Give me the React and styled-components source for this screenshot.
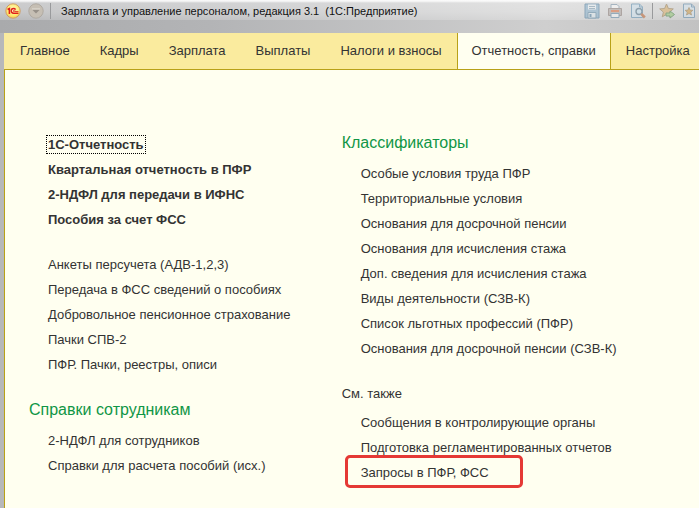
import React from "react";
import styled, { createGlobalStyle } from "styled-components";

const GlobalStyle = createGlobalStyle`
  * {
    box-sizing: border-box;
  }
  html,
  body,
  #root {
    height: 100%;
  }
  body {
    margin: 0;
    font-family: "Liberation Sans", Arial, sans-serif;
    font-size: 13px;
    color: #333;
  }
`;

const Window = styled.div`
  display: flex;
  flex-direction: column;
  min-height: 100%;
  padding-left: 4px;
  overflow: hidden;
  background-color: #b7b8ba;
`;

const TitleBar = styled.header`
  display: flex;
  flex-direction: column;
  height: 33px;
  margin-left: -4px;
  background: linear-gradient(to right, #a9aaac, #b3b4b6 30%, #cfcfcf 78%, #c2c2c2);
`;

const TitleRow = styled.div`
  display: flex;
  align-items: center;
  height: 20px;
  padding: 2px 3px 0 5px;
  background: linear-gradient(
    rgba(255, 255, 255, 0.9) 1px,
    rgba(255, 255, 255, 0.4) 3px,
    rgba(255, 255, 255, 0.35) 12px,
    rgba(255, 255, 255, 0.2)
  );
`;

const TitleButton = styled.button`
  display: flex;
  padding: 0;
  border: none;
  background-color: transparent;
  opacity: ${(props) => (props.$faded ? 0.5 : 1)};
  cursor: pointer;
`;

const ButtonGroup = styled.div`
  display: flex;
  align-items: center;
  gap: 7px;
`;

const Separator = styled.span`
  width: 1px;
  height: 16px;
  margin: 0 6px;
  background-color: #999a9c;
`;

const Title = styled.h1`
  flex: 1;
  margin: 0;
  padding-left: 4px;
  font-size: 11px;
  font-weight: 400;
  line-height: 16px;
  white-space: pre;
  color: #111;
`;

const Tabs = styled.nav`
  display: flex;
  padding-left: 1px;
  background-color: #faeb9e;
  border-bottom: 1px solid #b8a118;
`;

const Tab = styled.a`
  flex: none;
  height: 36px;
  padding: 0 15px;
  line-height: 36px;
  text-decoration: none;
  white-space: nowrap;
  color: #333;
  &.active {
    height: 37px;
    margin-bottom: -1px;
    padding: 0 14px;
    border: solid #b8a118;
    border-width: 0 1px 1px;
    background-color: #fffff0;
  }
`;

const Content = styled.main`
  flex: 1;
  display: grid;
  grid-template-columns: 7fr 8fr;
  padding: 60px 0 16px 24px;
  border-left: 1px solid #b8a118;
  background-color: #fffff0;
`;

const Column = styled.div`
  display: flex;
  flex-direction: column;
  gap: 20px;
  padding-top: ${(props) => props.$top || 0}px;
`;

const SectionTitle = styled.h2`
  margin: 0 0 6px;
  font-size: 16px;
  font-weight: 400;
  line-height: 25px;
  color: #109646;
`;

const SeeAlso = styled.h3`
  margin: 0 0 4px;
  font-size: 13px;
  font-weight: 400;
  line-height: 25px;
`;

const List = styled.ul`
  margin: 0;
  padding: 0 0 0 19px;
  list-style: none;
  font-weight: ${(props) => (props.$bold ? 700 : 400)};
`;

const Item = styled.li`
  display: flex;
  align-items: center;
  height: 25px;
`;

const ItemLink = styled.a`
  position: relative;
  line-height: 15px;
  text-decoration: none;
  white-space: nowrap;
  color: #333;
  &.focused {
    outline: 1px dotted #000;
    outline-offset: 1px;
  }
  &.marked::after {
    content: "";
    position: absolute;
    inset: -10px -34px -8px -16px;
    border: 3px solid #e53935;
    border-radius: 5px;
  }
`;

const tabs = [
  "Главное",
  "Кадры",
  "Зарплата",
  "Выплаты",
  "Налоги и взносы",
  "Отчетность, справки",
  "Настройка",
];

const mainReports = [
  "1С-Отчетность",
  "Квартальная отчетность в ПФР",
  "2-НДФЛ для передачи в ИФНС",
  "Пособия за счет ФСС",
];

const reports = [
  "Анкеты персучета (АДВ-1,2,3)",
  "Передача в ФСС сведений о пособиях",
  "Добровольное пенсионное страхование",
  "Пачки СПВ-2",
  "ПФР. Пачки, реестры, описи",
];

const employeeReports = [
  "2-НДФЛ для сотрудников",
  "Справки для расчета пособий (исх.)",
];

const classifiers = [
  "Особые условия труда ПФР",
  "Территориальные условия",
  "Основания для досрочной пенсии",
  "Основания для исчисления стажа",
  "Доп. сведения для исчисления стажа",
  "Виды деятельности (СЗВ-К)",
  "Список льготных профессий (ПФР)",
  "Основания для досрочной пенсии (СЗВ-К)",
];

const seeAlso = [
  "Сообщения в контролирующие органы",
  "Подготовка регламентированных отчетов",
  "Запросы в ПФР, ФСС",
];

const LogoIcon = () => (
  <svg width="16" height="16" viewBox="0 0 16 16">
    <defs>
      <radialGradient id="logo" cx="0.5" cy="0.4" r="0.7">
        <stop offset="0" stopColor="#fff9c4" />
        <stop offset="0.6" stopColor="#fdea70" />
        <stop offset="1" stopColor="#efb43a" />
      </radialGradient>
    </defs>
    <circle cx="8" cy="8" r="7.2" fill="url(#logo)" stroke="#cf9c68" />
    <g fill="none" stroke="#e0201a">
      <path d="M2.6 6.5 4.4 5.5V11" strokeWidth="1.6" />
      <path d="M10.6 6.6C10 5.600 9.200 5.500 8.500 5.500 7 5.500 6.200 6.600 6.200 7.800S7 10.200 8.500 10.200H13.500" strokeWidth="1.400" />
      <path d="M10.300 7.600C9.800 7.200 8.300 7 8.300 8S9 8.500 9.500 8.500H13.500" strokeWidth="0.800" />
    </g>
  </svg>
);

const MenuIcon = () => (
  <svg width="16" height="16" viewBox="0 0 16 16">
    <circle cx="8" cy="8" r="7.2" fill="#c6bfb4" stroke="#b0aaa2" />
    <path d="M4 6.5h8L8 10.5z" fill="#979189" />
    <path d="M4 6h8" stroke="#e5e0d8" />
  </svg>
);

const SaveIcon = () => (
  <svg width="16" height="16" viewBox="0 0 16 16">
    <path d="M1 1h14v14H1z" fill="#7fabc9" stroke="#3f7398" />
    <path d="M4 1.5h8v5H4z" fill="#eef5f9" />
    <path d="M5 3.5h6M5 5.5h6" stroke="#7295ac" />
    <path d="M4 9.5h8V15H4z" fill="#dbe8ef" stroke="#4d7c9b" />
    <path d="M5.5 11h2v3h-2z" fill="#3f7398" />
  </svg>
);

const PrintIcon = () => (
  <svg width="16" height="16" viewBox="0 0 16 16">
    <path d="M4 1.500h6l2 2V7H4z" fill="#fff" stroke="#6d8ba3" />
    <path d="M1.500 5.500h13v7h-13z" fill="#a9a09c" stroke="#80706a" />
    <path d="M4 8h8" stroke="#d9622f" strokeWidth="2" />
    <path d="M4 10.500h8v4H4z" fill="#f4f7fa" stroke="#4f7ea0" />
  </svg>
);

const PreviewIcon = () => (
  <svg width="16" height="16" viewBox="0 0 16 16">
    <path d="M1.5 1h8l3 3v10.5h-11z" fill="#cfe3f1" stroke="#4f86ac" />
    <path d="M9.5 1v3h3" fill="none" stroke="#4f86ac" />
    <circle cx="9" cy="8.5" r="3" fill="#c4e1f2" stroke="#44687f" strokeWidth="1.4" />
    <path d="m11.300 10.800 3.500 3.700" stroke="#b8561d" strokeWidth="2.6" />
  </svg>
);

const FavoriteIcon = () => (
  <svg width="16" height="16" viewBox="0 0 16 16">
    <path
      d="m7.5 1 1.9 4.5 4.900.4-3.700 3.200 1.100 4.700-4.200-2.500-4.200 2.500 1.100-4.700L.7 5.900l4.900-.4z"
      fill="#d9a95c"
      stroke="#927443"
    />
    <path d="M7 10h4V8l4.500 3.500L11 15v-2H7z" fill="#8cc56c" stroke="#3c7a39" />
  </svg>
);

const FavoritesListIcon = () => (
  <svg width="14" height="16" viewBox="0 0 14 16">
    <path d="M1.5 1h8l3 3v10.5h-11z" fill="#d5e5f0" stroke="#4f80a5" />
    <path d="M9.5 1v3h3" fill="none" stroke="#4f80a5" />
    <path
      d="m7 4.500 1.100 2.600 2.800.2-2.100 1.900.7 2.800L7 10.500 4.500 12l.7-2.800-2.100-1.900 2.800-.2z"
      fill="#d0963a"
      stroke="#80602f"
      strokeWidth="0.7"
    />
  </svg>
);

const LinkList = (props) => {
  const { items, bold, focused, marked } = props;
  const getClass = (item) => {
    if (item === focused) return "focused";
    return item === marked ? "marked" : "";
  };
  return (
    <List $bold={bold}>
      {items.map((item) => (
        <Item key={item}>
          <ItemLink href="#" className={getClass(item)}>
            {item}
          </ItemLink>
        </Item>
      ))}
    </List>
  );
};

const App = () => {
  return (
    <Window>
      <GlobalStyle />
      <TitleBar>
        <TitleRow>
          <ButtonGroup>
            <TitleButton aria-label="1С">
              <LogoIcon />
            </TitleButton>
            <TitleButton aria-label="Меню">
              <MenuIcon />
            </TitleButton>
          </ButtonGroup>
          <Separator />
          <Title>{"Зарплата и управление персоналом, редакция 3.1  (1С:Предприятие)"}</Title>
          <ButtonGroup>
            <TitleButton $faded aria-label="Сохранить">
              <SaveIcon />
            </TitleButton>
            <TitleButton $faded aria-label="Печать">
              <PrintIcon />
            </TitleButton>
            <TitleButton $faded aria-label="Просмотр">
              <PreviewIcon />
            </TitleButton>
          </ButtonGroup>
          <Separator />
          <ButtonGroup>
            <TitleButton $faded aria-label="Добавить в избранное">
              <FavoriteIcon />
            </TitleButton>
            <TitleButton $faded aria-label="Избранное">
              <FavoritesListIcon />
            </TitleButton>
          </ButtonGroup>
        </TitleRow>
      </TitleBar>
      <Tabs>
        {tabs.map((tab) => (
          <Tab key={tab} href="#" className={tab === "Отчетность, справки" ? "active" : ""}>
            {tab}
          </Tab>
        ))}
      </Tabs>
      <Content>
        <Column $top={2}>
          <LinkList items={mainReports} bold focused="1С-Отчетность" />
          <LinkList items={reports} />
          <section>
            <SectionTitle>Справки сотрудникам</SectionTitle>
            <LinkList items={employeeReports} />
          </section>
        </Column>
        <Column>
          <section>
            <SectionTitle>Классификаторы</SectionTitle>
            <LinkList items={classifiers} />
          </section>
          <section>
            <SeeAlso>См. также</SeeAlso>
            <LinkList items={seeAlso} marked="Запросы в ПФР, ФСС" />
          </section>
        </Column>
      </Content>
    </Window>
  );
};
export default App;
